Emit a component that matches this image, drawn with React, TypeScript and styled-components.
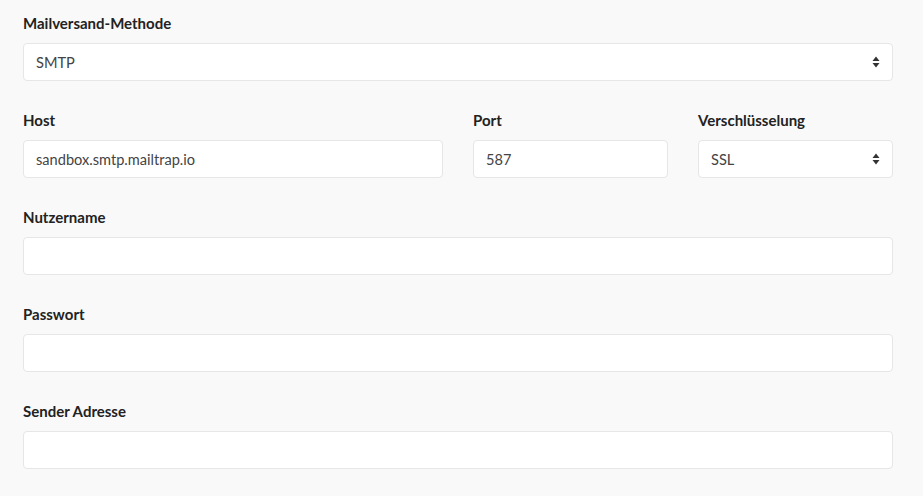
import React from 'react';
import styled, { createGlobalStyle } from 'styled-components';

const GlobalStyle = createGlobalStyle`
    html, body {
        margin: 0;
        padding: 0;
        background: #f9f9f9;
    }
    body {
        font-family: Lato, "Open Sans", sans-serif;
        color: #222;
    }
`;

const Page = styled.div`
    padding: 14px 30px 26px 23px;
    display: flex;
    flex-direction: column;
    gap: 30px;
`;

const Row = styled.div<{ $columns?: string }>`
    display: grid;
    grid-template-columns: ${(p) => p.$columns || '1fr'};
    column-gap: 30px;
`;

const Field = styled.div`
    display: flex;
    flex-direction: column;
    gap: 10px;
`;

const Label = styled.label`
    font-size: 15px;
    font-weight: 700;
    line-height: 19px;
    color: #222;
`;

const Input = styled.input`
    box-sizing: border-box;
    width: 100%;
    height: 38px;
    padding: 0 12px;
    border: 1px solid #e6e6e6;
    border-radius: 4px;
    background: #fff;
    font-family: inherit;
    font-size: 14.6px;
    color: #444;

    &:focus {
        outline: none;
    }
`;

const SelectBox = styled.div`
    position: relative;
`;

const Select = styled.select`
    box-sizing: border-box;
    width: 100%;
    height: 38px;
    padding: 0 32px 0 12px;
    border: 1px solid #e6e6e6;
    border-radius: 4px;
    background: #fff;
    font-family: inherit;
    font-size: 14.6px;
    color: #444;
    appearance: none;

    &:focus {
        outline: none;
    }
`;

const Caret = styled.svg`
    position: absolute;
    right: 13px;
    top: 50%;
    transform: translateY(-50%);
    pointer-events: none;
`;

const UpDown = () => (
    <Caret width="8" height="12" viewBox="0 0 8 12">
        <path d="M4 0.5 L7.5 5 H0.5 Z M4 11.5 L7.5 7 H0.5 Z" fill="#333" />
    </Caret>
);

const Dropdown = ({ value, options }: { value: string; options: string[] }) => (
    <SelectBox>
        <Select defaultValue={value}>
            {options.map((o) => (
                <option key={o} value={o}>{o}</option>
            ))}
        </Select>
        <UpDown />
    </SelectBox>
);

const App = () => {
    return (
        <>
            <GlobalStyle />
            <Page>
                <Row>
                    <Field>
                        <Label>Mailversand-Methode</Label>
                        <Dropdown value='SMTP' options={['SMTP', 'Sendmail', 'PHP Mail']} />
                    </Field>
                </Row>
                <Row $columns='420fr 195fr 195fr'>
                    <Field>
                        <Label>Host</Label>
                        <Input type='text' defaultValue='sandbox.smtp.mailtrap.io' />
                    </Field>
                    <Field>
                        <Label>Port</Label>
                        <Input type='text' defaultValue='587' />
                    </Field>
                    <Field>
                        <Label>Verschlüsselung</Label>
                        <Dropdown value='SSL' options={['SSL', 'TLS', 'Keine']} />
                    </Field>
                </Row>
                <Row>
                    <Field>
                        <Label>Nutzername</Label>
                        <Input type='text' />
                    </Field>
                </Row>
                <Row>
                    <Field>
                        <Label>Passwort</Label>
                        <Input type='password' />
                    </Field>
                </Row>
                <Row>
                    <Field>
                        <Label>Sender Adresse</Label>
                        <Input type='email' />
                    </Field>
                </Row>
            </Page>
        </>
    );
};

export default App;
